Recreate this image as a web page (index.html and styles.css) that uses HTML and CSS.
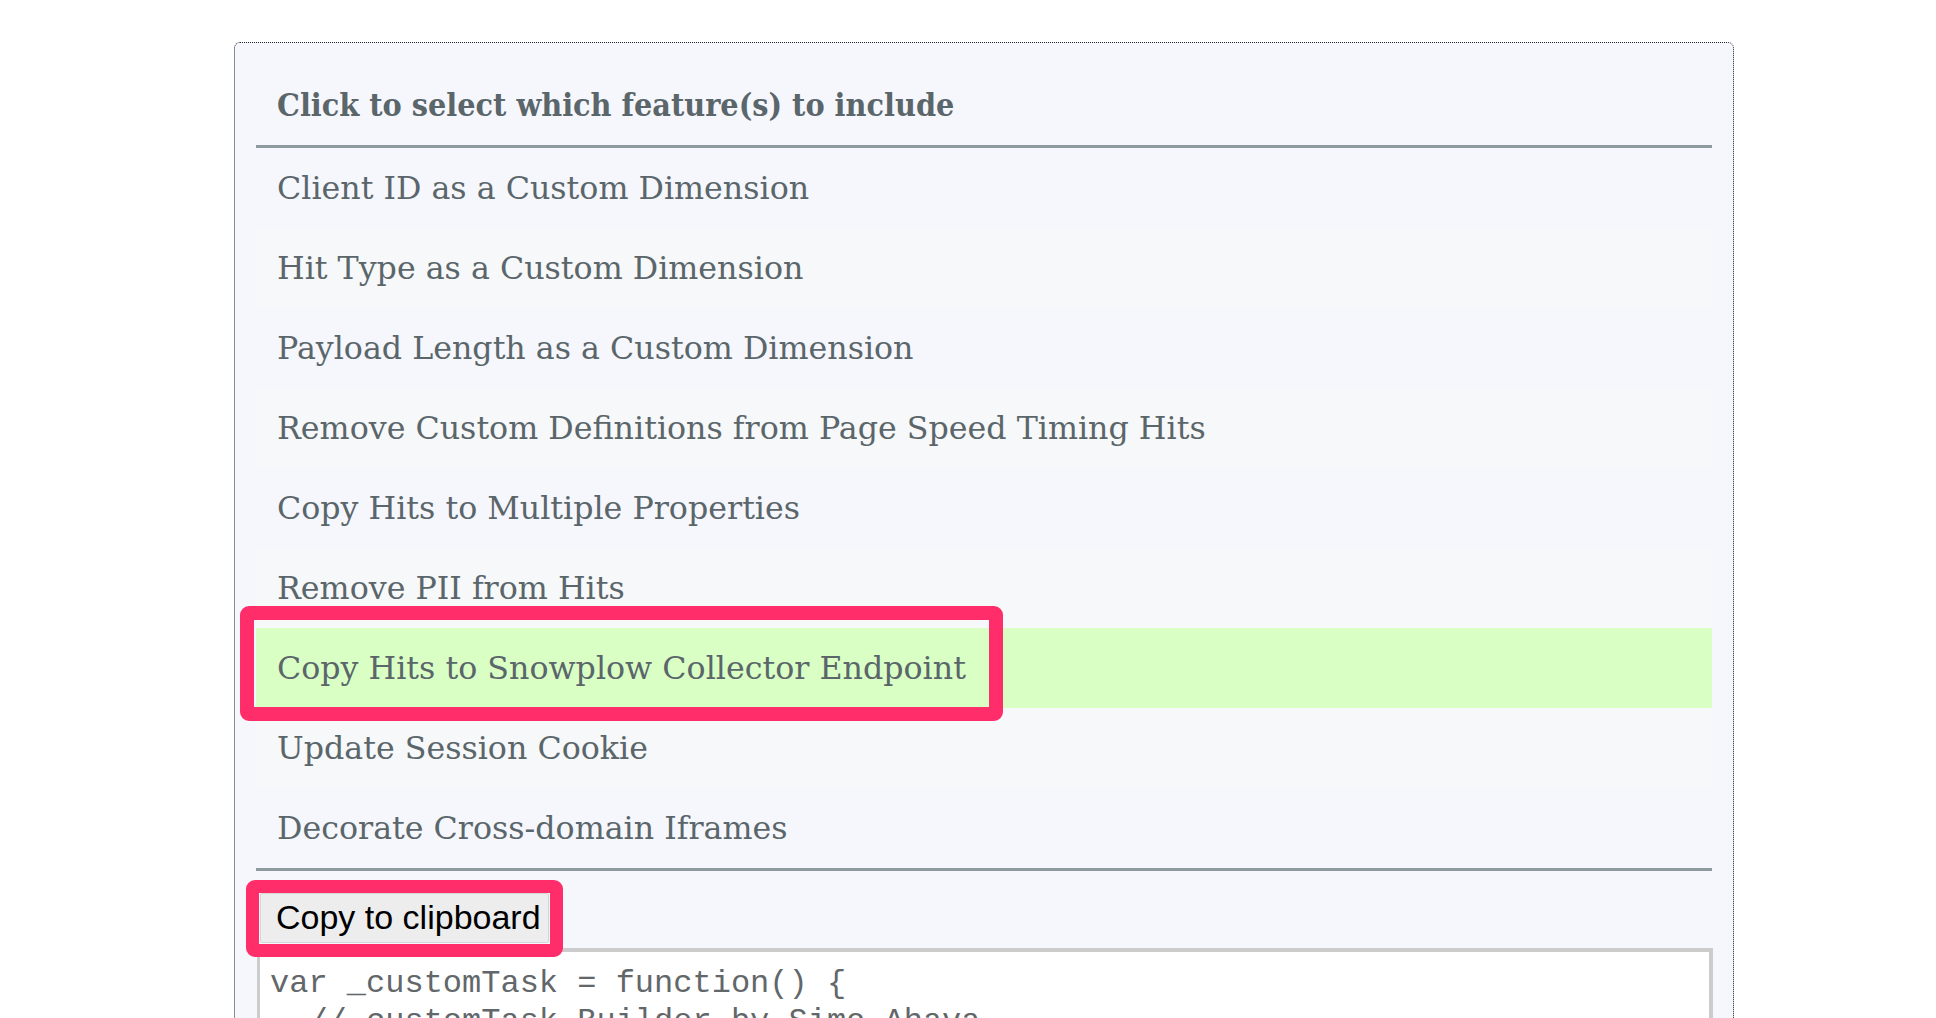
FILE: index.html
```html
<!DOCTYPE html>
<html>
<head>
<meta charset="utf-8">
<link rel="stylesheet" href="styles.css">
</head>
<body>
<div class="builder">
  <table class="features">
    <thead>
      <tr><th>Click to select which feature(s) to include</th></tr>
    </thead>
    <tbody>
      <tr><td>Client ID as a Custom Dimension</td></tr>
      <tr><td>Hit Type as a Custom Dimension</td></tr>
      <tr><td>Payload Length as a Custom Dimension</td></tr>
      <tr><td>Remove Custom Definitions from Page Speed Timing Hits</td></tr>
      <tr><td>Copy Hits to Multiple Properties</td></tr>
      <tr><td>Remove PII from Hits</td></tr>
      <tr class="selected"><td><span class="mark mark-row"></span>Copy Hits to Snowplow Collector Endpoint</td></tr>
      <tr><td>Update Session Cookie</td></tr>
      <tr><td>Decorate Cross-domain Iframes</td></tr>
    </tbody>
  </table>
  <div class="actions">
    <button class="copy">Copy to clipboard</button>
    <span class="mark mark-btn"></span>
  </div>
  <pre class="code">var _customTask = function() {
  // customTask Builder by Simo Ahava
  //
  // More information about customTask: https://www.simoahava.com/analytics/customtask-the-guide/
  //
  // Change these to match your setup
  var snowplowEndpoint = 'https://collector.mydomain.com';
  var snowplowPath = '/com.google.analytics/v1';
};</pre>
</div>
</body>
</html>
```

FILE: styles.css
```css
html, body {
  margin: 0;
  padding: 0;
  background: #ffffff;
}

.builder {
  position: relative;
  box-sizing: border-box;
  width: 1500px;
  margin: 42px 0 0 234px;
  padding: 23px 20px 0 21px;
  background: #f5f7fd;
  border: 1px dotted #1f2226;
  border-radius: 6px;
}

.features {
  width: 1456px;
  border-collapse: collapse;
  font-family: "DejaVu Serif", "Liberation Serif", serif;
  color: #5b666b;
}

.features th {
  height: 80px;
  padding: 0 0 0 21px;
  text-align: left;
  font-family: "DejaVu Serif Condensed", "DejaVu Serif", serif;
  font-stretch: condensed;
  font-size: 32px;
  font-weight: bold;
  border-bottom: 3px solid #8f9a9f;
  box-sizing: border-box;
}

.features td {
  position: relative;
  height: 80px;
  padding: 0 0 0 21px;
  font-size: 31.7px;
  border: 0;
}

.features tbody tr:nth-child(even) td {
  background: #f6f8f9;
}

.features tbody tr.selected td {
  background: #d9ffc4;
}

.features tbody tr:last-child td {
  border-bottom: 3px solid #8f9a9f;
}

.actions {
  position: relative;
  padding-top: 22px;
  height: 50px;
}

.copy {
  height: 50px;
  margin: 0 0 0 4px;
  padding: 0 7px 0 15px;
  font-family: "Liberation Sans", Arial, sans-serif;
  font-size: 34px;
  color: #000;
  background: #ededed;
  border: 1px solid #d6d6d6;
  border-radius: 2px;
}

.code {
  margin: 5px 0 0 1px;
  padding: 13px 10px;
  height: 200px;
  overflow: hidden;
  background: #ffffff;
  border: 4px solid #cccccc;
  border-left-width: 3px;
  font-family: "Liberation Mono", "Courier New", monospace;
  font-size: 32px;
  line-height: 38px;
  color: #62676a;
}

.mark {
  position: absolute;
  z-index: 5;
  box-sizing: border-box;
  border: 14px solid #ff2e6b;
  border-radius: 9px;
  pointer-events: none;
}

.mark-row {
  left: -16px;
  top: -22px;
  width: 763px;
  height: 115px;
}

.mark-btn {
  left: -10px;
  top: 9px;
  width: 317px;
  height: 77px;
  border-width: 13px;
}
```
